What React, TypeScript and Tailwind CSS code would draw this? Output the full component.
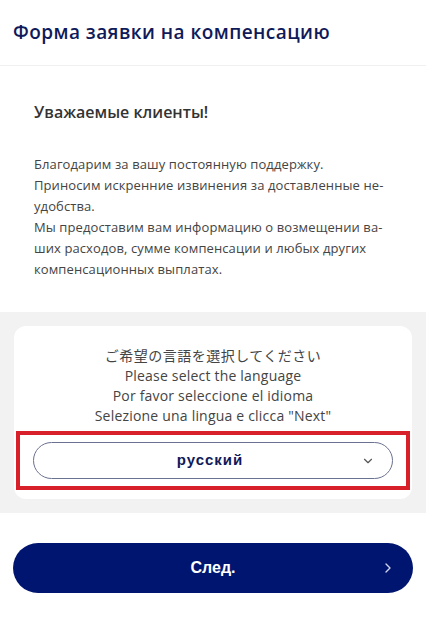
import { ChevronDown, ChevronRight } from "lucide-react";

const font = { fontFamily: '"Open Sans", "Noto Sans", "Noto Sans CJK JP", sans-serif' };
const arial = { fontFamily: '"Liberation Sans", Arial, sans-serif' };

export default function App() {
  return (
    <div className="min-h-[624px] w-[426px] bg-white text-[#333]" style={font}>
      <header className="flex h-[66px] items-center border-b border-[#f0f0f0] px-[13px]">
        <h1 className="text-[19px] font-semibold tracking-[0.45px] text-[#0f1a5a]">
          Форма заявки на компенсацию
        </h1>
      </header>

      <section className="px-[34px] pb-[32px] pt-[34px]">
        <h2 className="text-[16px] font-semibold text-[#333]">Уважаемые клиенты!</h2>
        <p className="mt-[30px] text-[13px] leading-[21px] tracking-[0.1px] text-[#444]">
          Благодарим за вашу постоянную поддержку.
          <br />
          Приносим искренние извинения за доставленные не-
          <br />
          удобства.
          <br />
          Мы предоставим вам информацию о возмещении ва-
          <br />
          ших расходов, сумме компенсации и любых других
          <br />
          компенсационных выплатах.
        </p>
      </section>

      <section className="bg-[#f2f2f2] px-[14px] py-[14px]">
        <div className="rounded-[12px] bg-white pb-[9px] pt-[20px]">
          <div className="text-center text-[14px] leading-[20px] tracking-[0.2px] text-[#444]">
            <div className="tracking-[0.5px]">ご希望の言語を選択してください</div>
            <div>Please select the language</div>
            <div>Por favor seleccione el idioma</div>
            <div>Selezione una lingua e clicca "Next"</div>
          </div>
          <div className="mx-[2px] mt-[5px] border-[4px] border-[#d8202b] px-[13px] py-[7px]">
            <button className="relative flex h-[37px] w-full items-center justify-center rounded-full border border-[#6b7190] bg-white">
              <span className="mr-[6px] text-[15px] font-bold tracking-[1px] text-[#0f1a5a]" style={arial}>
                русский
              </span>
              <ChevronDown className="absolute right-[17px] text-[#555]" size={14} strokeWidth={2} />
            </button>
          </div>
        </div>
      </section>

      <div className="px-[13px] pt-[30px]">
        <button className="relative flex h-[50px] w-full items-center justify-center rounded-full bg-[#001570] text-white">
          <span className="text-[16px] font-bold" style={arial}>
            След.
          </span>
          <ChevronRight className="absolute right-[17px] text-[#d0d4ee]" size={16} strokeWidth={2} />
        </button>
      </div>
    </div>
  );
}
